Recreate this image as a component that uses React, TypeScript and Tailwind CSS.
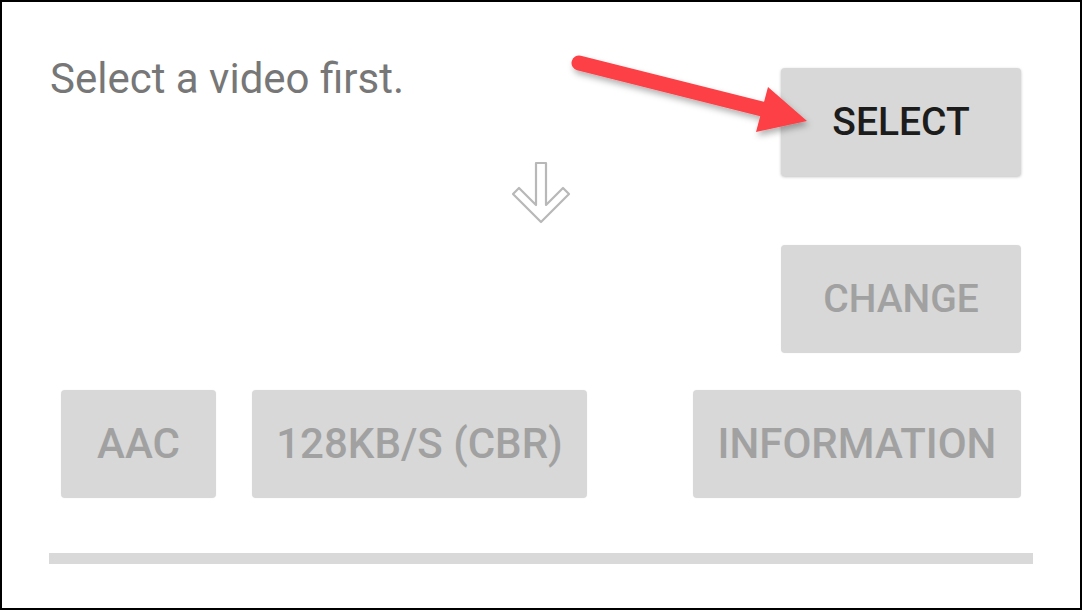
import React from 'react';

const font = { fontFamily: 'Roboto, "Noto Sans", sans-serif' };

const GrayButton: React.FC<{ label: string; className?: string; active?: boolean }> = ({
  label,
  className = '',
  active = false,
}) => (
  <div
    className={`flex h-[108px] items-center justify-center rounded-[4px] bg-[#d7d8d7] font-medium leading-none ${
      active ? 'text-[#1c1c1c] shadow-[0_1px_3px_rgba(0,0,0,0.25)]' : 'text-[#a1a1a1] shadow-[0_0_2px_rgba(0,0,0,0.06)]'
    } ${className}`}
  >
    {label}
  </div>
);

const DownArrow = () => (
  <svg width="60" height="65" viewBox="0 0 60 65" fill="none">
    <path
      d="M25 2 H35 V44 L52 27 L58 33 L30 61 L2 33 L8 27 L25 44 Z"
      stroke="#b8b8b8"
      strokeWidth="2.2"
      strokeLinejoin="round"
      fill="#ffffff"
    />
  </svg>
);

const RedArrow = () => (
  <svg
    className="pointer-events-none absolute left-0 top-0"
    width="1082"
    height="610"
    viewBox="0 0 1082 610"
  >
    <defs>
      <filter id="sh" x="-10%" y="-30%" width="130%" height="180%">
        <feDropShadow dx="2" dy="4" stdDeviation="3" floodColor="#000" floodOpacity="0.3" />
      </filter>
    </defs>
    <g filter="url(#sh)" fill="#fc4045">
      <line x1="577" y1="61" x2="768" y2="109" stroke="#fc4045" strokeWidth="15" strokeLinecap="round" />
      <polygon points="766,85 754,130 805,119" />
    </g>
  </svg>
);

export default function App() {
  return (
    <div className="relative h-[610px] w-[1082px] overflow-hidden border-2 border-black bg-white" style={font}>
      {/* top row */}
      <div className="flex items-start justify-between pl-[48px] pr-[59px] pt-[53px]">
        <div className="text-[42px] leading-[48px] text-[#777777]">Select a video first.</div>
        <GrayButton label="SELECT" active className="mt-[13px] w-[240px] text-[39px]" />
      </div>

      <div className="-mt-[15px] flex justify-center">
        <DownArrow />
      </div>

      <div className="mt-[19px] flex justify-end pr-[59px]">
        <GrayButton label="CHANGE" className="w-[240px] text-[39px]" />
      </div>

      <div className="mt-[37px] flex items-center pl-[59px] pr-[59px]">
        <GrayButton label="AAC" className="w-[155px] text-[42px]" />
        <GrayButton label="128KB/S (CBR)" className="ml-[36px] w-[335px] text-[42px]" />
        <div className="flex-1" />
        <GrayButton label="INFORMATION" className="w-[328px] text-[42px]" />
      </div>

      <div className="mx-[47px] mt-[55px] h-[11px] w-[984px] bg-[#d9d9d9]" />

      <RedArrow />
    </div>
  );
}
